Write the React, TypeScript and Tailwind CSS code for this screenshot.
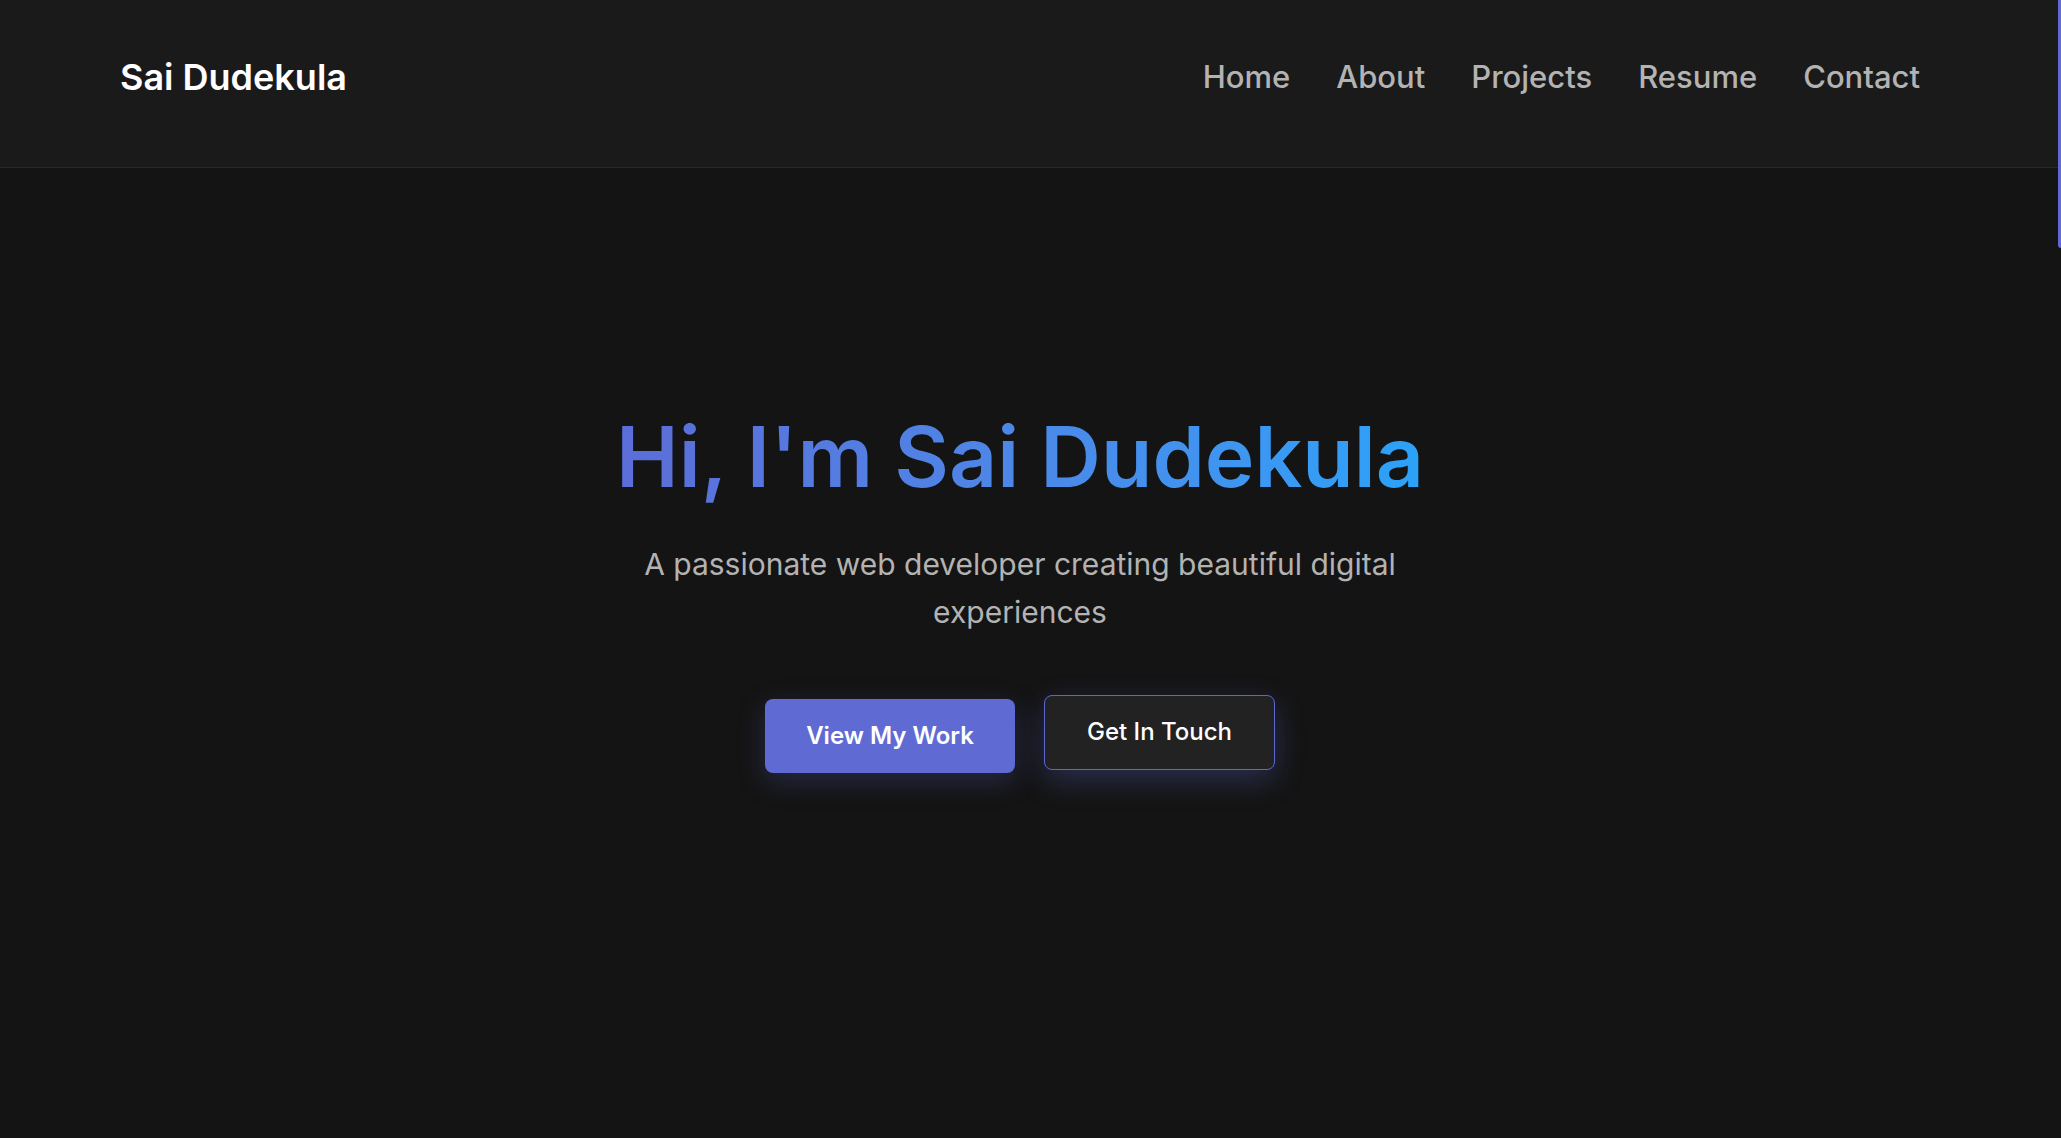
import React from "react";

const links = ["Home", "About", "Projects", "Resume", "Contact"];

const App = () => {
  return (
    <div className="flex min-h-screen bg-[#141414] font-['Inter',sans-serif]">
      <div className="flex flex-1 flex-col">
        {/* Navbar */}
        <header className="flex h-[168px] items-center justify-between border-b border-[#2a2a2a] bg-[#1a1a1a] pb-[14px] pl-[120px] pr-[138px]">
          <a href="#" className="text-[36px] font-semibold leading-none text-white">
            Sai Dudekula
          </a>
          <nav className="flex items-center gap-[46px]">
            {links.map((l) => (
              <a
                key={l}
                href="#"
                className="text-[31px] font-medium leading-none text-[#b3b3b3]"
              >
                {l}
              </a>
            ))}
          </nav>
        </header>

        {/* Hero */}
        <main className="flex flex-1 flex-col items-center pr-[18px] pt-[239px] text-center">
          <h1 className="bg-gradient-to-r from-[#5b6dd8] to-[#2aa2f8] bg-clip-text text-[84px] font-semibold leading-[1.2] text-transparent">
            Hi, I'm Sai Dudekula
          </h1>
          <p className="mt-[32px] max-w-[800px] text-[30px] leading-[48px] text-[#b3b3b3]">
            A passionate web developer creating beautiful digital experiences
          </p>
          <div className="mt-[63px] flex items-start gap-[29px]">
            <a
              href="#"
              className="flex h-[74px] w-[250px] items-center justify-center rounded-[8px] bg-[#5f6bd3] text-[24px] font-semibold text-white shadow-[0_8px_28px_rgba(95,107,211,0.25)]"
            >
              View My Work
            </a>
            <a
              href="#"
              className="-mt-[4px] flex h-[75px] w-[231px] items-center justify-center rounded-[8px] border-[1.5px] border-[#5a68d0] bg-[#222222] text-[24px] font-medium text-white shadow-[0_10px_30px_rgba(95,107,211,0.3)]"
            >
              Get In Touch
            </a>
          </div>
        </main>
      </div>

      {/* scrollbar */}
      <div className="w-[3px] bg-[#141414]">
        <div className="h-[248px] rounded-bl-[3px] bg-[#6168d8]" />
      </div>
    </div>
  );
};

export default App;
